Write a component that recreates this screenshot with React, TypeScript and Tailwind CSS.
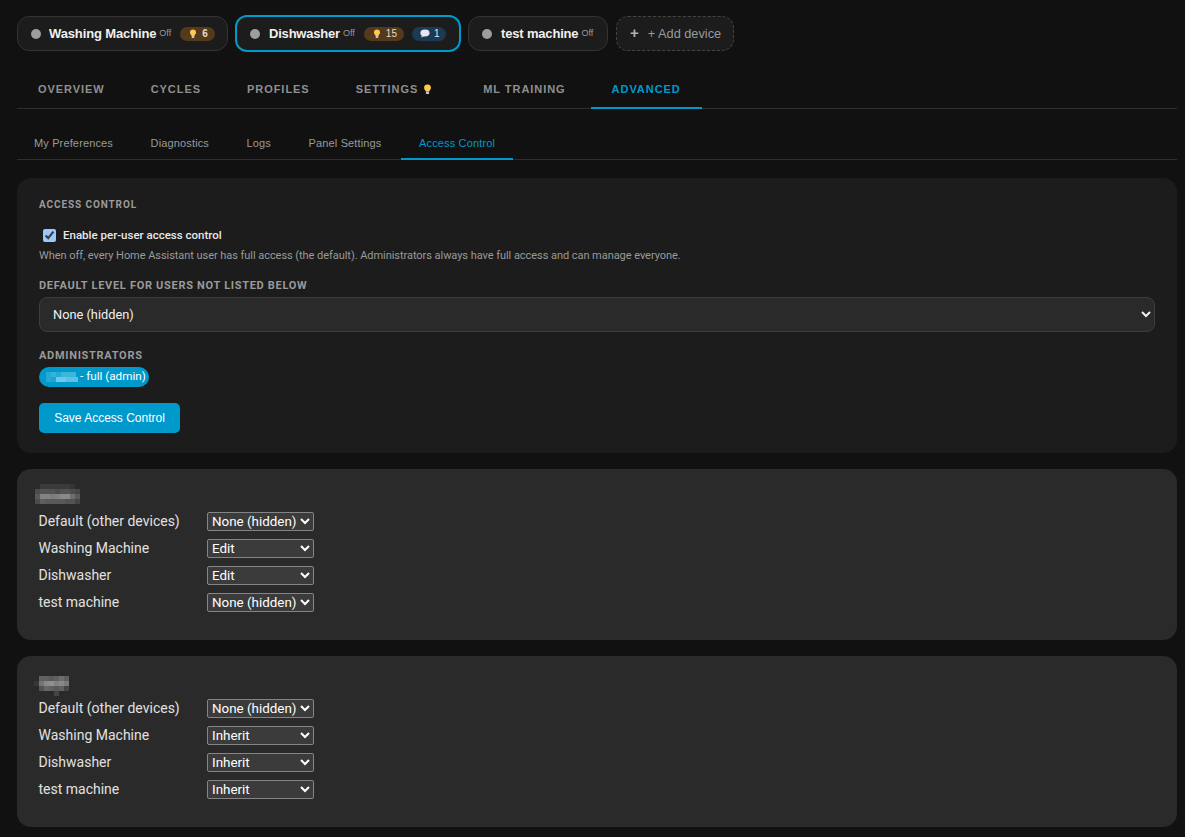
import React from "react";

const Bulb = ({ s = 10 }: { s?: number }) => (
  <svg width={s} height={s * 1.2} viewBox="0 0 10 12" className="shrink-0">
    <path d="M5 .5a3.8 3.8 0 0 0-3.8 3.8c0 1.5.9 2.3 1.5 3.2.3.5.4.9.4 1.2h3.8c0-.3.1-.7.4-1.2.6-.9 1.5-1.7 1.5-3.2A3.8 3.8 0 0 0 5 .5z" fill="#fcc94d" />
    <rect x="3.2" y="8.8" width="3.6" height="2.4" rx="1" fill="#cfc4d8" />
  </svg>
);

const Bubble = () => (
  <svg width="10" height="9" viewBox="0 0 10 9" className="shrink-0">
    <ellipse cx="5" cy="4" rx="4.6" ry="3.4" fill="#e8e6f5" />
    <path d="M2 6l-.8 2.4L4.4 7z" fill="#e8e6f5" />
  </svg>
);

const Dot = () => <span className="w-[10px] h-[10px] rounded-full bg-[#9e9e9e] shrink-0" />;

const Mosaic = ({ cells, w, color }: { cells: number[][]; w: number; color: string }) => (
  <svg width={w} height={cells.length * 5} viewBox={`0 0 ${w} ${cells.length * 5}`} className="block">
    {cells.flatMap((row, y) =>
      row.map((o, x) => <rect key={`${x}-${y}`} x={x * 5} y={y * 5} width="5" height="5" fill={color} opacity={o} />)
    )}
  </svg>
);

const mainTabs = ["OVERVIEW", "CYCLES", "PROFILES", "SETTINGS", "ML TRAINING", "ADVANCED"];
const subTabs = ["My Preferences", "Diagnostics", "Logs", "Panel Settings", "Access Control"];

const Row = ({ label, value }: { label: string; value: string }) => (
  <div className="flex items-center h-[27px]">
    <span className="w-[168.5px] text-[14px] text-[#e1e1e1]">{label}</span>
    <select
      defaultValue={value}
      className="w-[107px] h-[19px] text-[13.4px] leading-[17px] text-white bg-[#3b3b3b] border border-[#858585] rounded-[2px] [color-scheme:dark] font-['Roboto',sans-serif]"
    >
      <option>None (hidden)</option>
      <option>Inherit</option>
      <option>Edit</option>
    </select>
  </div>
);

const UserCard = ({ rows, blur, w, top, left }: { rows: [string, string][]; blur: number[][]; w: number; top: string; left: string }) => (
  <section className="bg-[#2a2a2a] rounded-[14px] pl-[21.5px] pb-[24px] mb-[16px] h-[171px] pt-[39px] relative">
    <div className={`absolute ${top} ${left}`}>
      <Mosaic cells={blur} w={w} color="#b4b2b2" />
    </div>
    {rows.map(([l, v]) => (
      <Row key={l} label={l} value={v} />
    ))}
  </section>
);

export default function App() {
  return (
    <div className="bg-[#111111] pl-[17px] pr-[8px] pt-[15px] font-['Roboto',sans-serif] overflow-hidden h-[837px]">
      <div className="flex items-center h-[37px] font-['Liberation_Sans',sans-serif] whitespace-nowrap">
        <div className="flex items-center w-[211px] h-[35px] rounded-[12px] border border-[#333333] bg-[#1c1c1c] pl-[13px]">
          <Dot />
          <span className="ml-[8px] text-[13px] font-bold text-[#f0f0f0] tracking-[-0.13px]">Washing Machine</span>
          <span className="ml-[3px] text-[9px] text-[#9a9a9a]">Off</span>
          <span className="ml-[9px] flex items-center gap-[5px] h-[14px] pl-[9px] pr-[7px] rounded-full bg-[#54391a] text-[10px] font-bold text-[#e8dcc8]">
            <Bulb s={8} />6
          </span>
        </div>
        <div className="flex items-center w-[226px] h-[37px] ml-[7px] rounded-[12px] border-2 border-[#0099cc] bg-[#1c1c1c] pl-[13px]">
          <Dot />
          <span className="ml-[9px] text-[13px] font-bold text-[#f0f0f0] tracking-[-0.2px]">Dishwasher</span>
          <span className="ml-[3px] text-[9px] text-[#9a9a9a]">Off</span>
          <span className="ml-[9px] flex items-center gap-[5px] h-[14px] pl-[9px] pr-[7px] rounded-full bg-[#54391a] text-[10px] text-[#e8dcc8]">
            <Bulb s={8} />15
          </span>
          <span className="ml-[8px] flex items-center gap-[4px] h-[14px] pl-[8px] pr-[6px] rounded-full bg-[#1c3a52] text-[10px] text-[#dfe7ee]">
            <Bubble />1
          </span>
        </div>
        <div className="flex items-center w-[140px] h-[35px] ml-[7px] rounded-[12px] border border-[#333333] bg-[#1c1c1c] pl-[13px]">
          <Dot />
          <span className="ml-[9px] text-[13px] font-bold text-[#f0f0f0] tracking-[-0.17px]">test machine</span>
          <span className="ml-[3px] text-[9px] text-[#9a9a9a]">Off</span>
        </div>
        <div className="flex items-center w-[118px] h-[35px] ml-[8px] rounded-[12px] border border-dashed border-[#444444] bg-[#1c1c1c] pl-[13px] text-[12.75px] text-[#9a9a9a]">
          <span className="font-bold text-[15px] text-[#b0b0b0]">+</span>
          <span className="ml-[9px]">+ Add device</span>
        </div>
      </div>

      <nav className="flex gap-[4px] mt-[18px] h-[39px] border-b border-[#2e2e2e] font-['Liberation_Sans',sans-serif]">
        {mainTabs.map((t) => {
          const active = t === "ADVANCED";
          return (
            <div
              key={t}
              className={`flex items-center px-[21px] pt-[2px] h-[39px] text-[11px] font-bold tracking-[0.95px] border-b-2 ${active ? "text-[#0099cc] border-[#0099cc]" : "text-[#8f8f8f] border-transparent"}`}
            >
              {t}
              {t === "SETTINGS" && <span className="ml-[5px] w-[14px]"><Bulb s={9} /></span>}
            </div>
          );
        })}
      </nav>

      <nav className="flex gap-[1.6px] mt-[19px] h-[32px] border-b border-[#2e2e2e] font-['Liberation_Sans',sans-serif]">
        {subTabs.map((t) => {
          const active = t === "Access Control";
          return (
            <div
              key={t}
              className={`flex items-center px-[18px] first:pl-[17px] h-[32px] text-[11px] tracking-[0.14px] border-b-2 ${active ? "text-[#0099cc] border-[#0099cc]" : "text-[#9a9a9a] border-transparent"}`}
            >
              {t}
            </div>
          );
        })}
      </nav>

      <section className="bg-[#1c1c1c] rounded-[14px] mt-[18px] mb-[16px] h-[275px] px-[22px] pt-[20px]">
        <h2 className="text-[10px] leading-[13px] font-bold tracking-[0.9px] text-[#9a9a9a]">ACCESS CONTROL</h2>
        <label className="flex items-center mt-[18px] h-[14px]">
          <input type="checkbox" defaultChecked className="ml-[4px] mb-[2px] w-[13px] h-[13px] [color-scheme:dark]" />
          <span className="ml-[7px] text-[11.5px] font-medium text-[#e8e8e8]">Enable per-user access control</span>
        </label>
        <p className="mt-[6px] text-[11px] leading-[14px] tracking-[-0.05px] text-[#9a9a9a]">
          When off, every Home Assistant user has full access (the default). Administrators always have full access and can manage everyone.
        </p>
        <div className="mt-[16px] text-[11px] leading-[13px] font-bold tracking-[0.7px] text-[#9a9a9a]">DEFAULT LEVEL FOR USERS NOT LISTED BELOW</div>
        <select className="block mt-[5px] w-full h-[35px] pl-[9px] pr-[4px] text-[12.8px] text-[#f0f0f0] bg-[#2a2a2a] border border-[#3d3d3d] rounded-[8px] [color-scheme:dark]">
          <option>None (hidden)</option>
        </select>
        <div className="mt-[17px] text-[11px] leading-[13px] font-bold tracking-[0.7px] text-[#9a9a9a]">ADMINISTRATORS</div>
        <div className="mt-[5px] flex items-center w-[110px] h-[20px] rounded-full bg-[#0099cc] pl-[7px] text-[11.7px] text-white whitespace-nowrap">
          <Mosaic cells={[[0.2, 0.3, 0.2, 0.35, 0.35, 0.35, 0], [0.2, 0.15, 0.6, 0.6, 0.5, 0.5, 0.5]]} w={32} color="#b8eafa" />
          <span className="ml-[2px]">- full (admin)</span>
        </div>
        <button className="block mt-[16px] w-[141px] h-[30px] rounded-[5px] bg-[#0099cc] text-[12px] text-white font-['Liberation_Sans',sans-serif]">Save Access Control</button>
      </section>

      <UserCard
        w={45}
        top="top-[15px]"
        left="left-[18px]"
        blur={[
          [0, 0.12, 0.12, 0.12, 0.12, 0.12, 0.12, 0.08, 0],
          [0.25, 0.3, 0.3, 0.3, 0.25, 0.3, 0.3, 0.25, 0.2],
          [0.35, 0.65, 0.65, 0.6, 0.65, 0.7, 0.7, 0.5, 0.35],
          [0.25, 0.4, 0.35, 0.35, 0.35, 0.35, 0.3, 0.3, 0.2],
        ]}
        rows={[
          ["Default (other devices)", "None (hidden)"],
          ["Washing Machine", "Edit"],
          ["Dishwasher", "Edit"],
          ["test machine", "None (hidden)"],
        ]}
      />
      <UserCard
        w={35}
        top="top-[20px]"
        left="left-[17px]"
        blur={[
          [0, 0.4, 0.4, 0.35, 0.4, 0.5, 0.4],
          [0.1, 0.55, 0.7, 0.75, 0.65, 0.7, 0.6],
          [0, 0.3, 0.45, 0.4, 0.35, 0.4, 0.2],
          [0, 0, 0, 0, 0.2, 0, 0],
        ]}
        rows={[
          ["Default (other devices)", "None (hidden)"],
          ["Washing Machine", "Inherit"],
          ["Dishwasher", "Inherit"],
          ["test machine", "Inherit"],
        ]}
      />
    </div>
  );
}
